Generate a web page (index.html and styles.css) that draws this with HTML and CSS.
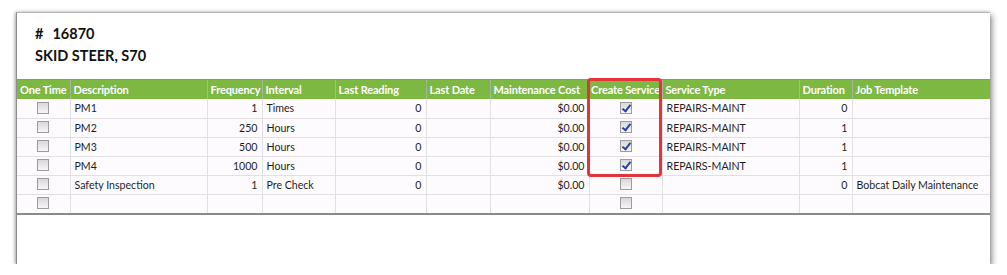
FILE: index.html
```html
<!DOCTYPE html>
<html>
<head>
<meta charset="utf-8">
<link rel="stylesheet" href="styles.css">
</head>
<body>
<div class="panel">
  <div class="title">
    <div class="num"><span class="hash">#</span>16870</div>
    <div class="name">SKID STEER, S70</div>
  </div>
  <div class="grid-wrap">
    <table class="grid">
      <colgroup>
        <col style="width:53px"><col style="width:137px"><col style="width:55px"><col style="width:73px">
        <col style="width:91px"><col style="width:64px"><col style="width:99px"><col style="width:73px">
        <col style="width:137px"><col style="width:53px"><col>
      </colgroup>
      <thead>
        <tr>
          <th class="c">One Time</th><th>Description</th><th>Frequency</th><th>Interval</th>
          <th class="pl">Last Reading</th><th>Last Date</th><th>Maintenance Cost</th><th class="c">Create Service</th>
          <th>Service Type</th><th>Duration</th><th>Job Template</th>
        </tr>
      </thead>
      <tbody>
        <tr><td class="c"><span class="cb"></span></td><td>PM1</td><td class="r">1</td><td>Times</td><td class="r">0</td><td></td><td class="r">$0.00</td><td class="c"><span class="cb on"></span></td><td>REPAIRS-MAINT</td><td class="r">0</td><td></td></tr>
        <tr><td class="c"><span class="cb"></span></td><td>PM2</td><td class="r">250</td><td>Hours</td><td class="r">0</td><td></td><td class="r">$0.00</td><td class="c"><span class="cb on"></span></td><td>REPAIRS-MAINT</td><td class="r">1</td><td></td></tr>
        <tr><td class="c"><span class="cb"></span></td><td>PM3</td><td class="r">500</td><td>Hours</td><td class="r">0</td><td></td><td class="r">$0.00</td><td class="c"><span class="cb on"></span></td><td>REPAIRS-MAINT</td><td class="r">1</td><td></td></tr>
        <tr><td class="c"><span class="cb"></span></td><td>PM4</td><td class="r">1000</td><td>Hours</td><td class="r">0</td><td></td><td class="r">$0.00</td><td class="c"><span class="cb on"></span></td><td>REPAIRS-MAINT</td><td class="r">1</td><td></td></tr>
        <tr><td class="c"><span class="cb"></span></td><td>Safety Inspection</td><td class="r">1</td><td>Pre Check</td><td class="r">0</td><td></td><td class="r">$0.00</td><td class="c"><span class="cb"></span></td><td></td><td class="r">0</td><td>Bobcat Daily Maintenance</td></tr>
        <tr><td class="c"><span class="cb"></span></td><td></td><td></td><td></td><td></td><td></td><td></td><td class="c"><span class="cb"></span></td><td></td><td></td><td></td></tr>
      </tbody>
    </table>
    <div class="highlight"></div>
  </div>
  <div class="footer"></div>
</div>
</body>
</html>
```
FILE: styles.css
```css
html, body {
  margin: 0;
  padding: 0;
  background: #ffffff;
}
body {
  padding: 12px 0 0 16px;
  font-family: Lato, "Noto Sans", sans-serif;
  color: #1e1e1e;
}
.panel {
  width: 973px;
  background: #ffffff;
  border-top: 1px solid #b5b5b5;
  border-left: 1px solid #8d8d8d;
  box-shadow: 2px 3px 6px rgba(0,0,0,0.45), -1px 0 3px rgba(0,0,0,0.25);
}
.title {
  height: 66px;
  padding: 11px 0 0 18px;
  box-sizing: border-box;
  font-weight: bold;
  font-size: 14.5px;
  color: #111;
}
.title .num {
  line-height: 20px;
}
.title .hash {
  margin-right: 9px;
}
.title .name {
  line-height: 24px;
}
.grid-wrap {
  position: relative;
  border-top: 1px solid #8f8f8f;
  border-bottom: 2px solid #8a8a8a;
}
.grid {
  width: 100%;
  table-layout: fixed;
  border-collapse: collapse;
  font-size: 10.6px;
}
.grid tr {
  height: 19px;
}
.grid th {
  background: #7cb842;
  color: #ffffff;
  font-weight: bold;
  font-size: 11px;
  letter-spacing: -0.15px;
  text-align: left;
  padding: 0 3px;
  border-right: 1px solid #a5b79a;
  white-space: nowrap;
  overflow: hidden;
}
.grid th.c { text-align: center; padding: 0 1px; }
.grid th:last-child { border-right: none; }
.grid td {
  background: #fdfbfe;
  padding: 0 4px;
  border-right: 1px solid #e2e0e3;
  border-bottom: 1px solid #e2e0e3;
  white-space: nowrap;
  overflow: hidden;
}
.grid td:last-child { border-right: none; }
.grid tr:last-child td { border-bottom: none; }
.grid .r { text-align: right; }
.grid .c { text-align: center; }
.cb {
  display: inline-block;
  width: 12px;
  height: 12px;
  box-sizing: border-box;
  border: 1px solid #9c9c9c;
  background: linear-gradient(#d8d8d8, #f6f6f6);
  vertical-align: middle;
  position: relative;
  top: -1px;
}
.cb.on::after {
  content: "";
  position: absolute;
  left: 3px;
  top: 0px;
  width: 3px;
  height: 7px;
  border-right: 2px solid #2b3fa8;
  border-bottom: 2px solid #2b3fa8;
  transform: rotate(38deg);
}
.highlight {
  position: absolute;
  left: 570px;
  top: -2px;
  width: 69px;
  height: 93px;
  border: 3px solid #e4343a;
  border-radius: 4px;
}
.footer {
  height: 49px;
}
```
